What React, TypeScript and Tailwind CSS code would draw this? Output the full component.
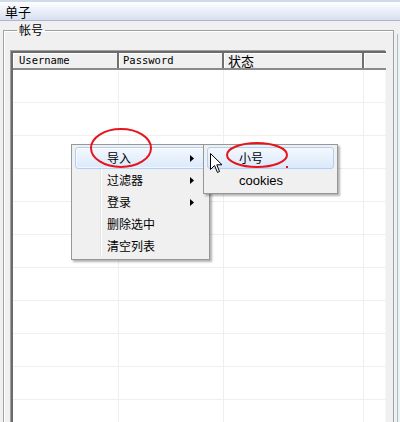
import React from "react";

const cjk = { fontFamily: '"Noto Sans CJK SC", "Liberation Sans", sans-serif' };
const mono = { fontFamily: '"DejaVu Sans Mono", "Liberation Mono", monospace' };

function Arrow() {
  return (
    <svg width="4" height="7" viewBox="0 0 4 7" className="block">
      <path d="M0 0 L4 3.5 L0 7 Z" fill="#000" />
    </svg>
  );
}

export default function App() {
  const rows = Array.from({ length: 12 });
  return (
    <div className="relative w-[400px] h-[422px] overflow-hidden bg-[#f0f0f0] text-black" style={cjk}>
      {/* title bar */}
      <div className="h-[21px] border-t-2 border-[#cfdbeb] border-b border-b-[#a9b6cf] bg-gradient-to-b from-[#fdfeff] to-[#d7dff1] flex items-center pl-[5px] text-[13px] leading-none">
        单子
      </div>
      {/* right edge panel line */}
      <div className="absolute right-[2px] top-[34px] bottom-0 w-px bg-[#9fbdd3]" />
      {/* group box */}
      <fieldset className="ml-[3px] w-[391px] mt-[2px] border border-[#a0a0a0] shadow-[inset_1px_1px_0_#fff] pl-[7px] pb-0 h-[420px]">
        <legend className="ml-[6px] px-[2px] text-[12px] leading-[14px]">帐号</legend>
        <div className="mt-[14px] w-[375px] bg-white border-l-2 border-t-2 border-[#6b6b6b] shadow-[-1px_-1px_0_#a0a0a0] h-[400px]">
          {/* header */}
          <div className="flex h-[17px] bg-[#f0f0f0] border-b-2 border-[#8a8a8a] text-[10.5px] leading-[15px]" style={mono}>
            <div className="w-[106px] pl-[6px] border-r-2 border-[#707070] shadow-[inset_1px_1px_0_#fff]">Username</div>
            <div className="w-[105px] pl-[4px] border-r-2 border-[#707070] shadow-[inset_1px_1px_0_#fff]">Password</div>
            <div className="w-[140px] pl-[4px] border-r-2 border-[#707070] shadow-[inset_1px_1px_0_#fff] text-[13px] leading-[15px]" style={cjk}>状态</div>
            <div className="flex-1 shadow-[inset_1px_1px_0_#fff]" />
          </div>
          {rows.map((_, i) => (
            <div key={i} className="flex h-[33px] border-b border-[#efefef]">
              <div className="w-[106px] border-r border-[#efefef]" />
              <div className="w-[105px] border-r border-[#efefef]" />
              <div className="w-[140px] border-r border-[#efefef]" />
              <div className="flex-1 border-r border-[#f6f6f6]" />
            </div>
          ))}
        </div>
      </fieldset>

      {/* context menu */}
      <div className="absolute left-[71px] top-[144px] w-[139px] h-[116px] bg-[#f0f0f0] border border-[#979797] shadow-[2px_2px_2px_rgba(0,0,0,0.3)] text-[12px]">
        <div className="absolute left-[28px] top-[2px] bottom-[2px] w-px bg-[#e2e3e3] shadow-[1px_0_0_#fff]" />
        <div className="relative flex flex-col pt-[2px] px-[3px]">
          {[
            { t: "导入", a: true, h: true },
            { t: "过滤器", a: true },
            { t: "登录", a: true },
            { t: "删除选中" },
            { t: "清空列表" },
          ].map((it, i) => (
            <div
              key={i}
              className={
                "h-[22px] flex items-center pl-[31px] pr-[11px] rounded-[3px] " +
                (it.h
                  ? "border border-[#aecff7] bg-gradient-to-b from-[#f3f8fe] to-[#dbe9fb] shadow-[inset_0_0_0_1px_rgba(255,255,255,0.6)]"
                  : "border border-transparent")
              }
            >
              <span className="flex-1 leading-none">{it.t}</span>
              {it.a && <Arrow />}
            </div>
          ))}
        </div>
      </div>

      {/* submenu */}
      <div className="absolute left-[203px] top-[144px] w-[135px] h-[50px] bg-[#f0f0f0] border border-[#979797] shadow-[2px_2px_2px_rgba(0,0,0,0.3)] text-[12px] px-[3px] pt-[2px]">
        <div className="h-[22px] flex items-center pl-[31px] rounded-[3px] border border-[#aecff7] bg-gradient-to-b from-[#f3f8fe] to-[#dbe9fb]">
          <span className="leading-none">小号</span>
        </div>
        <div className="h-[22px] flex items-center pl-[32px] leading-none" style={{ fontFamily: '"Liberation Sans", sans-serif', fontSize: 13 }}>
          cookies
        </div>
      </div>

      {/* red annotations */}
      <svg className="absolute left-0 top-0 pointer-events-none" width="400" height="422">
        <ellipse cx="121" cy="148" rx="30" ry="19" fill="none" stroke="#e8141c" strokeWidth="2" />
        <ellipse cx="257" cy="155" rx="30" ry="12" fill="none" stroke="#e8141c" strokeWidth="2" />
        <rect x="286" y="166" width="2" height="2" fill="#e8141c" />
      </svg>

      {/* cursor */}
      <svg className="absolute left-[210px] top-[153px]" width="13" height="21" viewBox="0 0 13 21">
        <path
          d="M0.5 0.5 L0.5 16.5 L4.5 12.5 L7.5 19.5 L9.5 18.5 L6.8 11.8 L12 11.8 Z"
          fill="#fff"
          stroke="#000"
          strokeWidth="1"
          strokeLinejoin="miter"
        />
      </svg>
    </div>
  );
}
